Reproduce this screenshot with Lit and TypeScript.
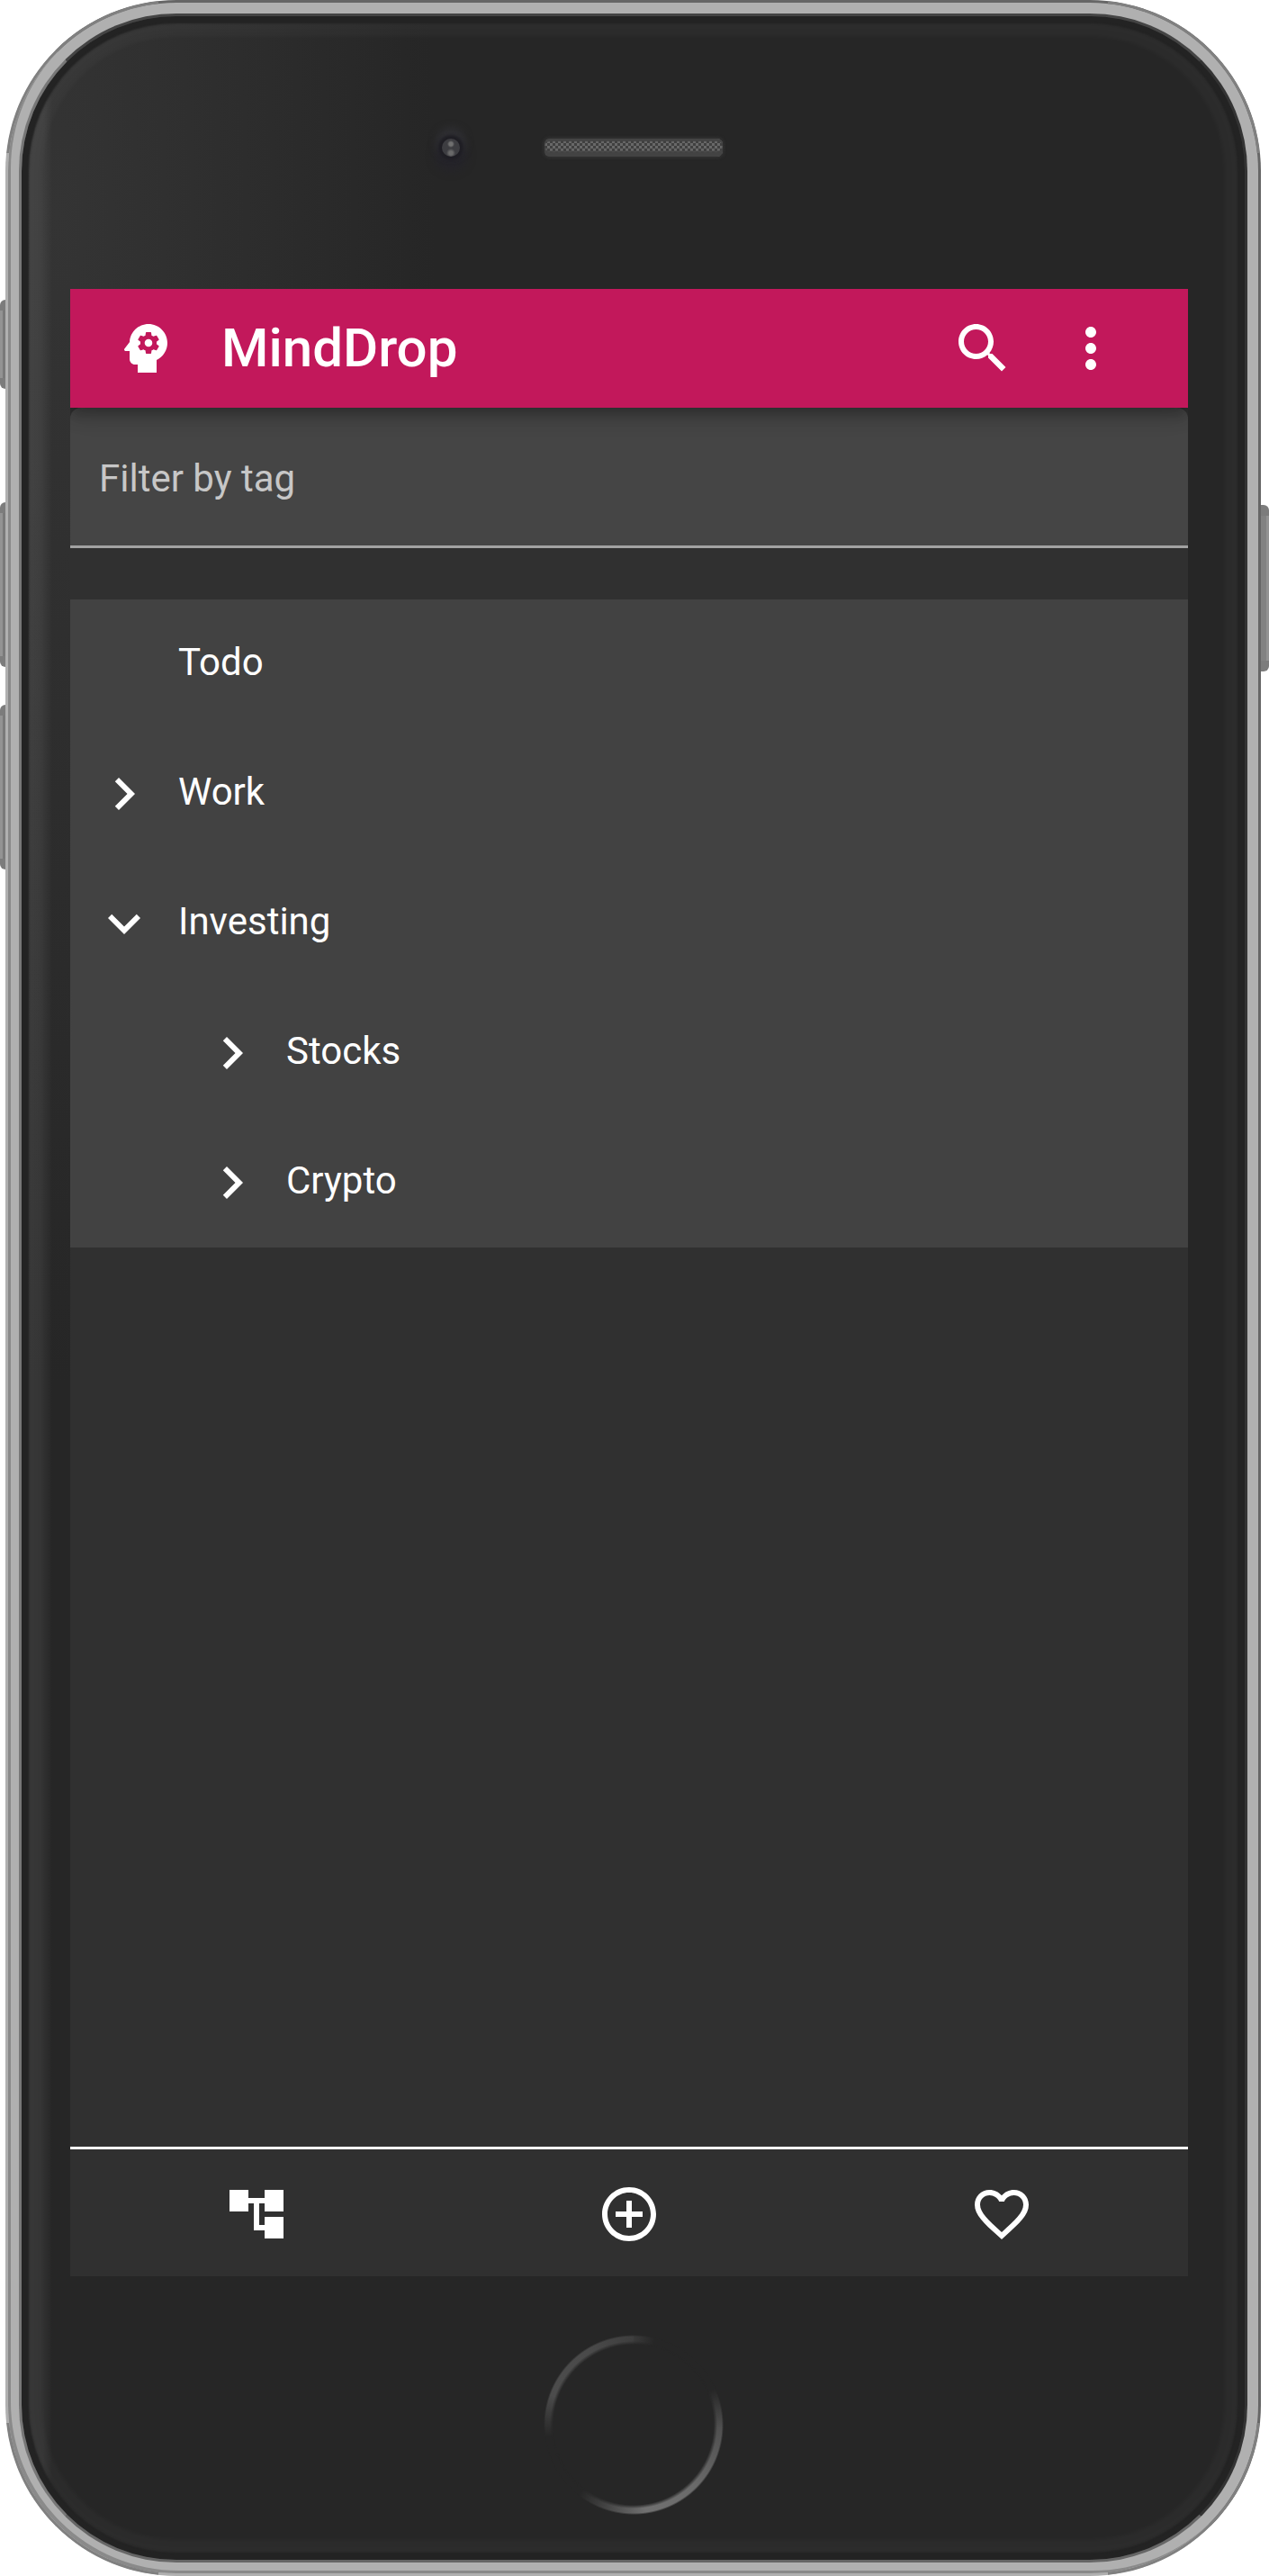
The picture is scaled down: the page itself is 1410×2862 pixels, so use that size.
import { LitElement, html, css, svg, nothing } from "lit";
import { customElement, property, state } from "lit/decorators.js";

const ICONS = {
  brand: svg`<path d="M13,8.57c-0.79,0-1.43,0.64-1.43,1.43s0.64,1.43,1.43,1.43s1.43-0.64,1.43-1.43S13.79,8.57,13,8.57z"/><path d="M13,3C9.25,3,6.2,5.94,6.02,9.64L4.1,12.2C3.85,12.53,4.09,13,4.5,13H6v3c0,1.1,0.9,2,2,2h1v3h7v-4.68c2.36-1.12,4-3.53,4-6.32C20,6.13,16.87,3,13,3z M16,10c0,0.13-0.01,0.26-0.02,0.39l0.83,0.66c0.08,0.06,0.1,0.16,0.05,0.25l-0.8,1.39c-0.05,0.09-0.16,0.12-0.24,0.09l-0.99-0.4c-0.21,0.16-0.43,0.29-0.67,0.39L14,13.83c-0.01,0.1-0.1,0.17-0.2,0.17h-1.6c-0.1,0-0.18-0.07-0.2-0.17l-0.15-1.06c-0.25-0.1-0.47-0.23-0.68-0.39l-0.99,0.4c-0.09,0.03-0.2,0-0.25-0.09l-0.8-1.39c-0.05-0.08-0.03-0.19,0.05-0.25l0.84-0.66C10.01,10.26,10,10.13,10,10c0-0.13,0.02-0.27,0.04-0.39L9.19,8.95c-0.08-0.06-0.1-0.16-0.05-0.26l0.8-1.38c0.05-0.09,0.15-0.12,0.24-0.09l1,0.4c0.2-0.15,0.43-0.29,0.67-0.39l0.15-1.06C12.02,6.07,12.1,6,12.2,6h1.6c0.1,0,0.18,0.07,0.2,0.17l0.15,1.06c0.24,0.1,0.46,0.23,0.67,0.39l1-0.4c0.09-0.03,0.2,0,0.24,0.09l0.8,1.38c0.05,0.09,0.03,0.2-0.05,0.26l-0.85,0.66C15.99,9.73,16,9.86,16,10z"/>`,
  search: svg`<path d="M15.5 14h-.79l-.28-.27C15.41 12.59 16 11.11 16 9.5 16 5.91 13.09 3 9.5 3S3 5.91 3 9.5 5.91 16 9.5 16c1.61 0 3.09-.59 4.23-1.57l.27.28v.79l5 4.99L20.49 19l-4.99-5zm-6 0C7.01 14 5 11.99 5 9.5S7.01 5 9.5 5 14 7.01 14 9.5 11.99 14 9.5 14z"/>`,
  more: svg`<path d="M12 8c1.1 0 2-.9 2-2s-.9-2-2-2-2 .9-2 2 .9 2 2 2zm0 2c-1.1 0-2 .9-2 2s.9 2 2 2 2-.9 2-2-.9-2-2-2zm0 6c-1.1 0-2 .9-2 2s.9 2 2 2 2-.9 2-2-.9-2-2-2z"/>`,
  right: svg`<path d="M10 6L8.59 7.41 13.17 12l-4.58 4.59L10 18l6-6z"/>`,
  down: svg`<path d="M16.59 8.59L12 13.17 7.41 8.59 6 10l6 6 6-6z"/>`,
  tree: svg`<path d="M22 11V3h-7v3H9V3H2v8h7V8h2v10h4v3h7v-8h-7v3h-2V8h2v3z"/>`,
  add: svg`<path d="M13 7h-2v4H7v2h4v4h2v-4h4v-2h-4V7zm-1-5C6.48 2 2 6.48 2 12s4.48 10 10 10 10-4.48 10-10S17.52 2 12 2zm0 18c-4.41 0-8-3.59-8-8s3.59-8 8-8 8 3.59 8 8-3.59 8-8 8z"/>`,
  heart: svg`<path d="M16.5 3c-1.74 0-3.41.81-4.5 2.09C10.91 3.81 9.24 3 7.5 3 4.42 3 2 5.42 2 8.5c0 3.78 3.4 6.86 8.55 11.54L12 21.35l1.45-1.32C18.6 15.36 22 12.28 22 8.5 22 5.42 19.58 3 16.5 3zm-4.4 15.55l-.1.1-.1-.1C7.14 14.24 4 11.39 4 8.5 4 6.5 5.5 5 7.5 5c1.54 0 3.04.99 3.57 2.36h1.87C13.46 5.99 14.96 5 16.5 5c2 0 3.5 1.5 3.5 3.5 0 2.89-3.14 5.74-7.9 10.05z"/>`,
};
type IconName = keyof typeof ICONS;

interface TagNode {
  name: string;
  parent?: boolean;
  children?: TagNode[];
}

const TAGS: TagNode[] = [
  { name: "Todo" },
  { name: "Work", parent: true },
  {
    name: "Investing",
    parent: true,
    children: [
      { name: "Stocks", parent: true },
      { name: "Crypto", parent: true },
    ],
  },
];

@customElement("md-icon")
class MdIcon extends LitElement {
  static styles = css`
    :host { display: block; width: 72px; height: 72px; flex: none; }
    .glyph { display: block; width: 100%; height: 100%; fill: currentColor; }
  `;
  @property() name: IconName = "search";
  render() {
    return html`<svg class="glyph" viewBox="0 0 24 24" aria-hidden="true">${ICONS[this.name]}</svg>`;
  }
}

@customElement("tag-tree")
class TagTree extends LitElement {
  static styles = css`
    :host { display: block; background: #424242; }
    .list { margin: 0; padding: 0; list-style: none; }
    .list .list { padding-left: 120px; }
    .row { display: flex; align-items: center; height: 144px; }
    .toggle {
      display: grid; place-items: center; width: 120px; height: 120px;
      margin: 0; padding: 0; border: 0; background: none; color: inherit; cursor: pointer;
    }
    .spacer { width: 120px; }
    .name { padding-bottom: 4px; font-size: 42px; line-height: 60px; }
  `;
  @state() private open = new Set<string>(["Investing"]);

  private toggle(name: string) {
    const next = new Set(this.open);
    if (!next.delete(name)) next.add(name);
    this.open = next;
  }

  private renderNode(node: TagNode): unknown {
    const open = this.open.has(node.name);
    return html`<li>
      <div class="row">
        ${node.parent
          ? html`<button class="toggle" aria-label="Toggle ${node.name}" aria-expanded=${open ? "true" : "false"}
              @click=${() => this.toggle(node.name)}><md-icon name=${open ? "down" : "right"}></md-icon></button>`
          : html`<span class="spacer"></span>`}
        <span class="name">${node.name}</span>
      </div>
      ${open && node.children
        ? html`<ul class="list">${node.children.map((c) => this.renderNode(c))}</ul>`
        : nothing}
    </li>`;
  }

  render() {
    return html`<ul class="list">${TAGS.map((n) => this.renderNode(n))}</ul>`;
  }
}

@customElement("mind-drop")
class MindDrop extends LitElement {
  static styles = css`
    :host {
      display: flex; flex-direction: column; overflow: hidden;
      background: #303030; color: #fff; font-family: Roboto, "Liberation Sans", sans-serif;
    }
    .toolbar {
      display: flex; align-items: center; height: 132px; padding: 0 48px;
      position: relative; z-index: 1; background: #c2185b;
      box-shadow: 0 6px 12px -3px rgba(0, 0, 0, 0.2), 0 12px 15px 0 rgba(0, 0, 0, 0.14), 0 3px 30px 0 rgba(0, 0, 0, 0.12);
    }
    .title { flex: 1; margin: 0; padding-left: 48px; font-size: 60px; line-height: 96px; font-weight: 500; }
    .icon-button {
      display: grid; place-items: center; width: 120px; height: 120px;
      margin: 0; padding: 0; border: 0; background: none; color: inherit; cursor: pointer;
    }
    .filter {
      box-sizing: border-box; width: 100%; height: 156px; margin: 0 0 57px; padding: 4px 32px 0;
      border: 0; border-bottom: 3px solid #a2a2a2; border-radius: 12px 12px 0 0;
      background: #454545; color: #fff; font: inherit; font-size: 42px; outline: none;
    }
    .filter::placeholder { color: #c7c7c7; opacity: 1; }
    .content { flex: 1; }
    .nav {
      display: grid; grid-template-columns: repeat(3, 1fr); box-sizing: border-box;
      height: 144px; padding-top: 3px; border-top: 3px solid #fff;
    }
    .tab { display: grid; place-items: center; color: inherit; }
  `;
  render() {
    return html`
      <header class="toolbar">
        <md-icon name="brand"></md-icon>
        <h1 class="title">MindDrop</h1>
        <button class="icon-button" aria-label="Search"><md-icon name="search"></md-icon></button>
        <button class="icon-button" aria-label="More"><md-icon name="more"></md-icon></button>
      </header>
      <main class="content">
        <input class="filter" type="text" placeholder="Filter by tag" aria-label="Filter by tag" />
        <tag-tree></tag-tree>
      </main>
      <nav class="nav">
        <a class="tab" href="#tags" aria-label="Tags"><md-icon name="tree"></md-icon></a>
        <a class="tab" href="#add" aria-label="Add"><md-icon name="add"></md-icon></a>
        <a class="tab" href="#favorites" aria-label="Favorites"><md-icon name="heart"></md-icon></a>
      </nav>
    `;
  }
}

@customElement("app-root")
class AppRoot extends LitElement {
  static styles = css`
    :host {
      display: flex; position: relative; box-sizing: border-box; min-height: 100vh;
      padding: 0 9px 0 6px; background: #fff; overflow: hidden;
    }
    .rim {
      flex: 1; display: flex; position: relative; box-sizing: border-box; padding: 12px;
      border: 3px solid; border-color: #666 #666 #b0b0b0 #b0b0b0; border-radius: 190px;
      background: #b0b0b0; box-shadow: inset 3px -3px 0 #8a8a8a;
    }
    /* Darker edge line that shows only round the four corners. */
    .rim::after {
      content: ""; position: absolute; inset: -3px; pointer-events: none;
      border: 3px solid #808080; border-radius: 190px;
      --corner: linear-gradient(#000, #000);
      -webkit-mask: var(--corner) 0 0 / 170px 170px no-repeat border-box, var(--corner) 100% 0 / 170px 170px no-repeat border-box,
        var(--corner) 0 100% / 170px 170px no-repeat border-box, var(--corner) 100% 100% / 170px 170px no-repeat border-box;
    }
    .glass {
      flex: 1; display: flex; flex-direction: column; padding: 0 63px 0 54px;
      border: 3px solid; border-color: #444 #333 #666 #777; border-radius: 175px;
      background:
        linear-gradient(to right, rgba(255, 255, 255, 0.05) 24px, transparent 34px),
        radial-gradient(ellipse 420px 1300px at 40px 220px, #343434, #262626);
      box-shadow:
        inset 0 0 2px 8px #232323,
        inset 0 0 6px 22px rgba(255, 255, 255, 0.03);
    }
    .top {
      display: grid; grid-template-columns: 1fr auto 1fr; align-items: center;
      box-sizing: border-box; height: 303px; padding-bottom: 12px;
      margin: 0 -63px 0 -54px;
    }
    .camera {
      justify-self: end; width: 20px; height: 20px; margin-right: 94px; border-radius: 50%;
      background: radial-gradient(circle at 50% 30%, #707070 0 2px, transparent 4px),
        radial-gradient(circle at 50% 80%, #6a6a6a 0 2px, transparent 5px), #3d3d41;
      box-shadow: 0 0 3px 4px #1f1e24, 0 -6px 8px 6px #303034, 0 8px 10px 8px #25242a;
    }
    .speaker {
      width: 198px; height: 20px; border-radius: 6px;
      background: repeating-conic-gradient(#686868 0 25%, #404040 0 50%) 0 2px / 6px 6px;
      box-shadow: inset 0 3px 1px #444, inset 0 -6px 2px #434343, 0 0 3px 2px #303030;
    }
    .screen { flex: 1; }
    .bottom {
      display: grid; place-items: center; box-sizing: border-box; height: 315px;
      padding-top: 14px; margin: 0 -63px 0 -54px;
    }
    .home {
      width: 202px; height: 202px; margin: 0; padding: 0; border: 0; border-radius: 50%;
      background: conic-gradient(#3a3a3a 0deg, #262626 14deg, #262626 66deg, #505050 92deg, #6a6a6a 135deg, #707070 172deg, #3a3a3a 205deg, #262626 218deg, #262626 262deg, #4c4c4c 290deg, #4a4a4a 330deg, #3e3e3e 360deg);
      -webkit-mask: radial-gradient(circle, transparent 89px, #000 93px, #000 98px, transparent 100px);
      mask: radial-gradient(circle, transparent 89px, #000 93px, #000 98px, transparent 100px);
    }
    .key {
      position: absolute; width: 9px; box-sizing: border-box;
      background: #939393; border: solid #7c7c7c; border-width: 12px 0;
    }
    .left { left: 0; border-radius: 6px 0 0 6px; box-shadow: inset -6px 0 #7a7a7a; }
    .right { right: 0; border-radius: 0 6px 6px 0; box-shadow: inset 6px 0 #828282; }
    .mute { top: 333px; height: 99px; }
    .up { top: 558px; height: 183px; }
    .down { top: 783px; height: 183px; }
    .power { top: 561px; height: 185px; }
  `;
  render() {
    return html`
      <span class="key left mute"></span>
      <span class="key left up"></span>
      <span class="key left down"></span>
      <span class="key right power"></span>
      <div class="rim">
        <div class="glass">
          <div class="top"><span class="camera"></span><span class="speaker"></span></div>
          <mind-drop class="screen"></mind-drop>
          <div class="bottom"><button class="home" aria-label="Home"></button></div>
        </div>
      </div>
    `;
  }
}
